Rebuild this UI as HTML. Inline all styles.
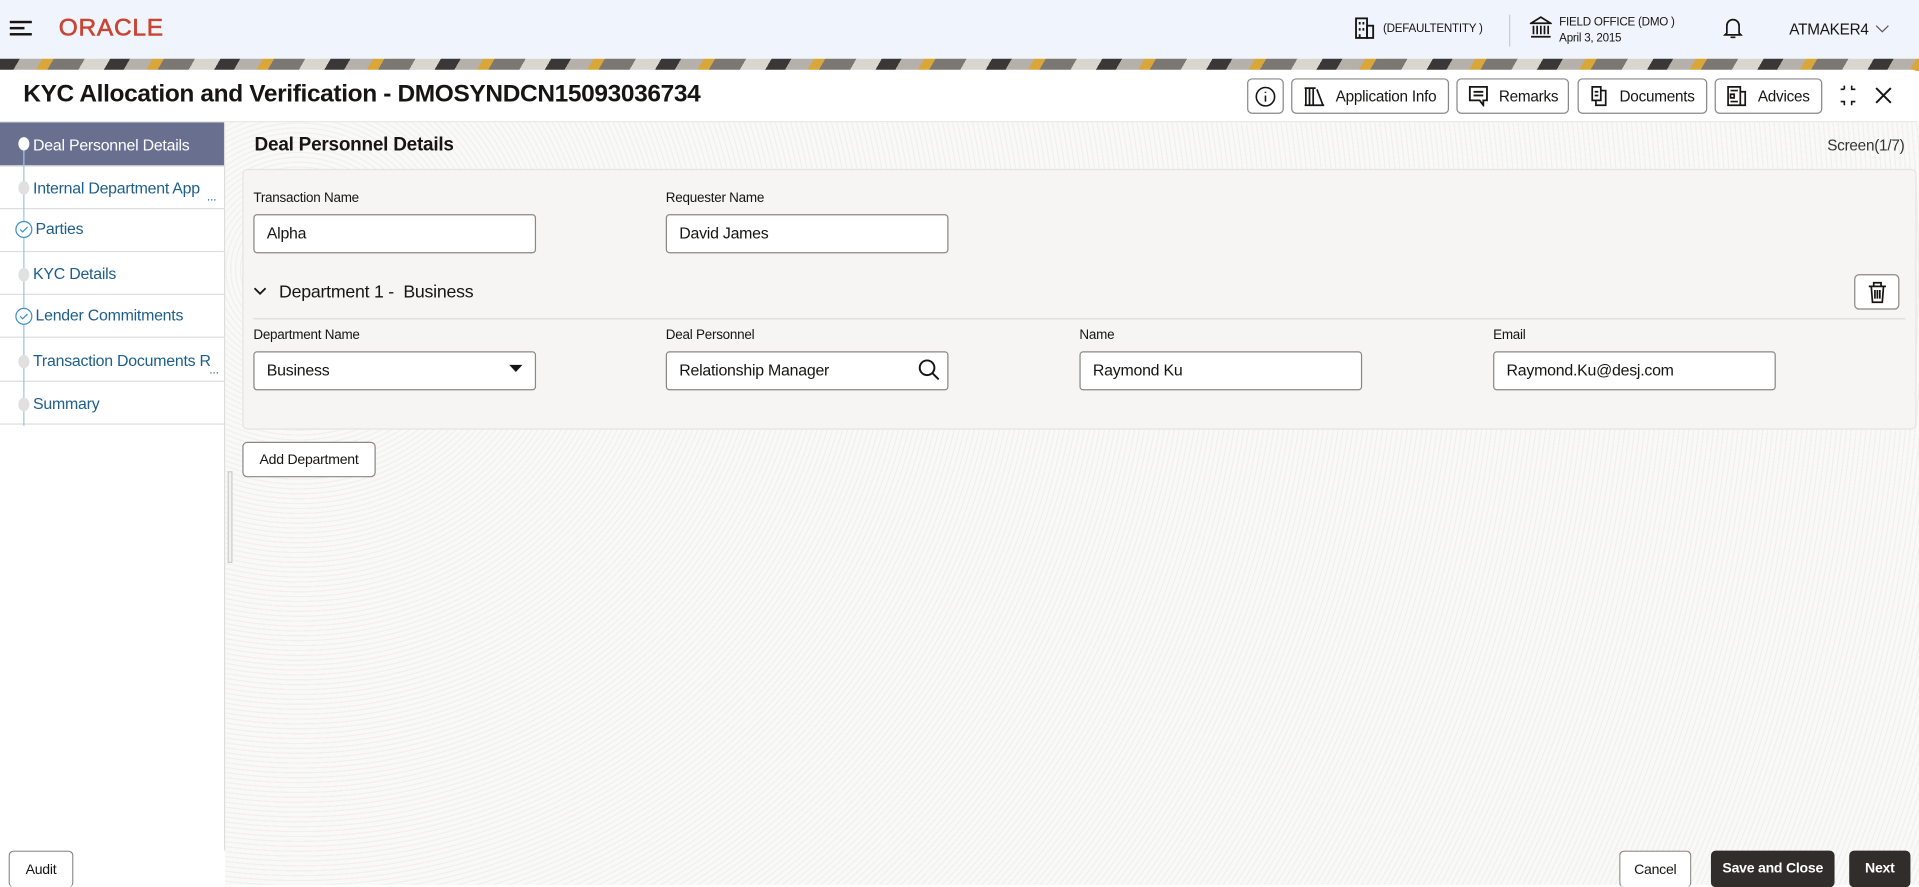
<!DOCTYPE html>
<html><head><meta charset="utf-8"><style>
*{box-sizing:border-box;margin:0;padding:0}
html,body{width:1919px;height:885px;overflow:hidden;background:#fff}
#w{position:absolute;left:0;top:0;width:1568px;height:723px;transform:scale(1.22385);transform-origin:0 0;font-family:"Liberation Sans",sans-serif;color:#161513;letter-spacing:-0.2px}
.a{position:absolute}
.hdr{left:0;top:0;width:1568px;height:48px;background:#f0f4fc}
.strip{left:0;top:48px;width:1568px;height:10px;background:repeating-linear-gradient(120deg,#3a3836 0 14px,#b5b0aa 14px 30px,#d9a63a 30px 38px,#7b7773 38px 60px,#d9d5cf 60px 78px)}
.panel{left:0;top:57px;width:1567px;height:666px;background:#fff;border-top-right-radius:4px}
.title{left:19px;top:66px;font-size:20px;font-weight:bold;letter-spacing:-0.3px}
.tb{top:64px;height:29px;border:1px solid #8a8785;border-radius:4px;background:#fff;font-size:12.5px;display:flex;align-items:center;justify-content:center;gap:8px}
.side{left:0;top:100px;width:184px;height:595px;background:#fff;border-right:1px solid #ddd}
.it{position:absolute;left:0;width:183px;height:35px;border-bottom:1px solid #ddd;font-size:13px;color:#1d5e8a;padding-left:27px;line-height:35px;white-space:nowrap;overflow:hidden}
.content{left:184px;top:100px;width:1384px;height:623px;background:#f9f9f8 repeating-radial-gradient(circle at 60px 120px,#f9f9f8 0 3px,#f1f0ee 3px 4px)}
.form{left:198px;top:138px;width:1368px;height:213px;background:#f6f5f3;border:1px solid #e6e4e1;border-radius:4px}
.lbl{font-size:11px;color:#161513}
.inp{height:32px;width:231px;border:1px solid #8a8785;border-radius:3px;background:#fff;font-size:13px;padding-left:10px;line-height:30px;color:#161513}
.btn{border:1px solid #8a8785;border-radius:4px;background:#fff;font-size:11.5px;display:flex;align-items:center;justify-content:center}
.dk{background:#312d2a;color:#fff;border-color:#312d2a;font-weight:bold}
</style></head><body><div id="w">
<div class="a hdr"></div>
<div class="a" style="left:8px;top:17px;width:18px;height:2px;background:#161513"></div>
<div class="a" style="left:8px;top:22px;width:12px;height:2px;background:#161513"></div>
<div class="a" style="left:8px;top:27px;width:18px;height:2px;background:#161513"></div>
<div class="a" style="left:48px;top:12px;font-size:20px;color:#c74634;letter-spacing:0.6px;-webkit-text-stroke:0.5px #c74634">ORACLE</div>
<svg class="a" style="left:1106px;top:14px" width="18" height="18" viewBox="0 0 18 18" fill="none" stroke="#161513" stroke-width="1.5"><rect x="2" y="1" width="9" height="16"/><rect x="11" y="7" width="5" height="10"/><path d="M5 4v2M8 4v2M5 9v2M8 9v2M5 14v3"/></svg>
<div class="a" style="left:1130px;top:18px;font-size:9.5px">(DEFAULTENTITY )</div>
<div class="a" style="left:1233px;top:12px;width:1px;height:26px;background:#ccc"></div>
<svg class="a" style="left:1250px;top:13px" width="18" height="18" viewBox="0 0 18 18" fill="none" stroke="#161513" stroke-width="1.4"><path d="M1 6L9 1l8 5zM1 17h16M3 8v7M6 8v7M9 8v7M12 8v7M15 8v7"/></svg>
<div class="a" style="left:1274px;top:12px;font-size:9.5px;line-height:13px">FIELD OFFICE (DMO )<br>April 3, 2015</div>
<svg class="a" style="left:1408px;top:14px" width="16" height="18" viewBox="0 0 16 18" fill="none" stroke="#161513" stroke-width="1.4"><path d="M3 13V7a5 5 0 0110 0v6l1.5 1.5h-13zM6 16.5h4"/></svg>
<div class="a" style="left:1462px;top:17px;font-size:12.5px">ATMAKER4</div>
<svg class="a" style="left:1532px;top:20px" width="12" height="8" viewBox="0 0 12 8" fill="none" stroke="#555" stroke-width="1"><path d="M1 1l5 5 5-5"/></svg>
<div class="a strip"></div>
<div class="a panel"></div>
<div class="a" style="left:0;top:99px;width:1567px;height:1px;background:#e5e5e5"></div>
<div class="a title">KYC Allocation and Verification - DMOSYNDCN15093036734</div>
<div class="a tb" style="left:1019px;width:30px"><svg width="18" height="18" viewBox="0 0 18 18" fill="none" stroke="#161513" stroke-width="1.3"><circle cx="9" cy="9" r="7.5"/><path d="M9 8v5M9 5v1"/></svg></div>
<div class="a tb" style="left:1055px;width:129px"><svg width="18" height="16" viewBox="0 0 18 16" fill="none" stroke="#161513" stroke-width="1.4"><path d="M2 1v14M5 1v14M8 1v14M11 2l5 13M1 15h16M1 1h9"/></svg>Application Info</div>
<div class="a tb" style="left:1190px;width:92px"><svg width="18" height="17" viewBox="0 0 18 17" fill="none" stroke="#161513" stroke-width="1.5"><path d="M2 1h14v11h-3v4l-3-4H2zM5 5h8M5 8h8"/></svg>Remarks</div>
<div class="a tb" style="left:1289px;width:106px"><svg width="16" height="17" viewBox="0 0 16 17" fill="none" stroke="#161513" stroke-width="1.4"><path d="M2 1h7v11H2zM9 4h4v12H5v-4M4 5h3M4 8h3"/></svg>Documents</div>
<div class="a tb" style="left:1401px;width:88px"><svg width="17" height="17" viewBox="0 0 17 17" fill="none" stroke="#161513" stroke-width="1.4"><path d="M1 1h10v15H1zM11 5h4v11h-4M3 4h6M3 7h3v3H3zM3 13h6"/></svg>Advices</div>
<svg class="a" style="left:1501px;top:69px" width="18" height="18" viewBox="0 0 18 18" fill="none" stroke="#161513" stroke-width="1.3"><path d="M6 1v3M6 4H3M12 1v3h3M6 17v-3H3M12 17v-3h3"/></svg>
<svg class="a" style="left:1532px;top:71px" width="14" height="14" viewBox="0 0 14 14" stroke="#161513" stroke-width="1.6"><path d="M1 1l12 12M13 1L1 13"/></svg>
<div class="a content"></div>
<div class="a side">
<div class="it" style="top:0;height:36px;background:#686f8f;color:#fff;line-height:38px">Deal Personnel Details</div>
<div class="it" style="top:36px">Internal Department App</div>
<div class="a" style="left:169px;top:56px;font-size:10px;color:#1d5e8a">...</div>
<div class="it" style="top:71px;padding-left:29px;line-height:32px">Parties</div>
<div class="it" style="top:106px;line-height:36px">KYC Details</div>
<div class="it" style="top:141px;padding-left:29px;line-height:34px">Lender Commitments</div>
<div class="it" style="top:177px;line-height:36px">Transaction Documents R</div>
<div class="a" style="left:171px;top:197px;font-size:10px;color:#1d5e8a">...</div>
<div class="it" style="top:212px;line-height:36px">Summary</div>
<div class="a" style="left:19px;top:18px;width:1px;height:230px;background:#9ec5dc"></div>
<div class="a" style="left:15px;top:12px;width:9px;height:11px;border-radius:50%;background:#fff"></div>
<div class="a" style="left:15px;top:48px;width:9px;height:11px;border-radius:50%;background:#e0e0e0"></div>
<svg class="a" style="left:12px;top:80px" width="15" height="15" viewBox="0 0 15 15" fill="#fff" stroke="#3a8fc4" stroke-width="1"><circle cx="7.5" cy="7.5" r="6.5"/><path d="M4.5 7.5l2 2 4-4" fill="none"/></svg>
<div class="a" style="left:15px;top:119px;width:9px;height:11px;border-radius:50%;background:#e0e0e0"></div>
<svg class="a" style="left:12px;top:151px" width="15" height="15" viewBox="0 0 15 15" fill="#fff" stroke="#3a8fc4" stroke-width="1"><circle cx="7.5" cy="7.5" r="6.5"/><path d="M4.5 7.5l2 2 4-4" fill="none"/></svg>
<div class="a" style="left:15px;top:190px;width:9px;height:11px;border-radius:50%;background:#e0e0e0"></div>
<div class="a" style="left:15px;top:225px;width:9px;height:11px;border-radius:50%;background:#e0e0e0"></div>
</div>
<div class="a" style="left:186px;top:385px;width:4px;height:75px;border:1px solid #ccc;background:#f2f2f2"></div>
<div class="a" style="left:208px;top:110px;font-size:15.5px;font-weight:bold">Deal Personnel Details</div>
<div class="a" style="left:1493px;top:112px;font-size:12.5px;color:#333">Screen(1/7)</div>
<div class="a form"></div>
<div class="a lbl" style="left:207px;top:156px">Transaction Name</div>
<div class="a inp" style="left:207px;top:175px">Alpha</div>
<div class="a lbl" style="left:544px;top:156px">Requester Name</div>
<div class="a inp" style="left:544px;top:175px">David James</div>
<svg class="a" style="left:207px;top:234px" width="11" height="8" viewBox="0 0 11 8" fill="none" stroke="#161513" stroke-width="1.5"><path d="M1 1.5l4.5 4.5 4.5-4.5"/></svg>
<div class="a" style="left:228px;top:231px;font-size:14.5px">Department 1 -&nbsp; Business</div>
<div class="a btn" style="left:1515px;top:224px;width:37px;height:29px"><svg width="16" height="18" viewBox="0 0 16 18" fill="none" stroke="#161513" stroke-width="1.4"><path d="M1 4h14M5 4V1h6v3M3 4l1 13h8l1-13M6 7v7M8 7v7M10 7v7"/></svg></div>
<div class="a" style="left:207px;top:260px;width:1350px;height:1px;background:#dedcd9"></div>
<div class="a lbl" style="left:207px;top:268px">Department Name</div>
<div class="a inp" style="left:207px;top:287px">Business</div>
<svg class="a" style="left:416px;top:298px" width="11" height="7" viewBox="0 0 11 7"><path d="M0 0h11L5.5 6z" fill="#161513"/></svg>
<div class="a lbl" style="left:544px;top:268px">Deal Personnel</div>
<div class="a inp" style="left:544px;top:287px">Relationship Manager</div>
<svg class="a" style="left:750px;top:293px" width="18" height="18" viewBox="0 0 18 18" fill="none" stroke="#161513" stroke-width="1.6"><circle cx="7.5" cy="7.5" r="6"/><path d="M12 12l5 5"/></svg>
<div class="a lbl" style="left:882px;top:268px">Name</div>
<div class="a inp" style="left:882px;top:287px">Raymond Ku</div>
<div class="a lbl" style="left:1220px;top:268px">Email</div>
<div class="a inp" style="left:1220px;top:287px">Raymond.Ku@desj.com</div>
<div class="a btn" style="left:198px;top:361px;width:109px;height:29px">Add Department</div>
<div class="a btn" style="left:7px;top:695px;width:53px;height:30px;border-bottom:none">Audit</div>
<div class="a btn" style="left:1323px;top:695px;width:59px;height:30px;border-bottom:none">Cancel</div>
<div class="a btn dk" style="left:1398px;top:695px;width:101px;height:30px">Save and Close</div>
<div class="a btn dk" style="left:1511px;top:695px;width:50px;height:30px">Next</div>
</div></body></html>
